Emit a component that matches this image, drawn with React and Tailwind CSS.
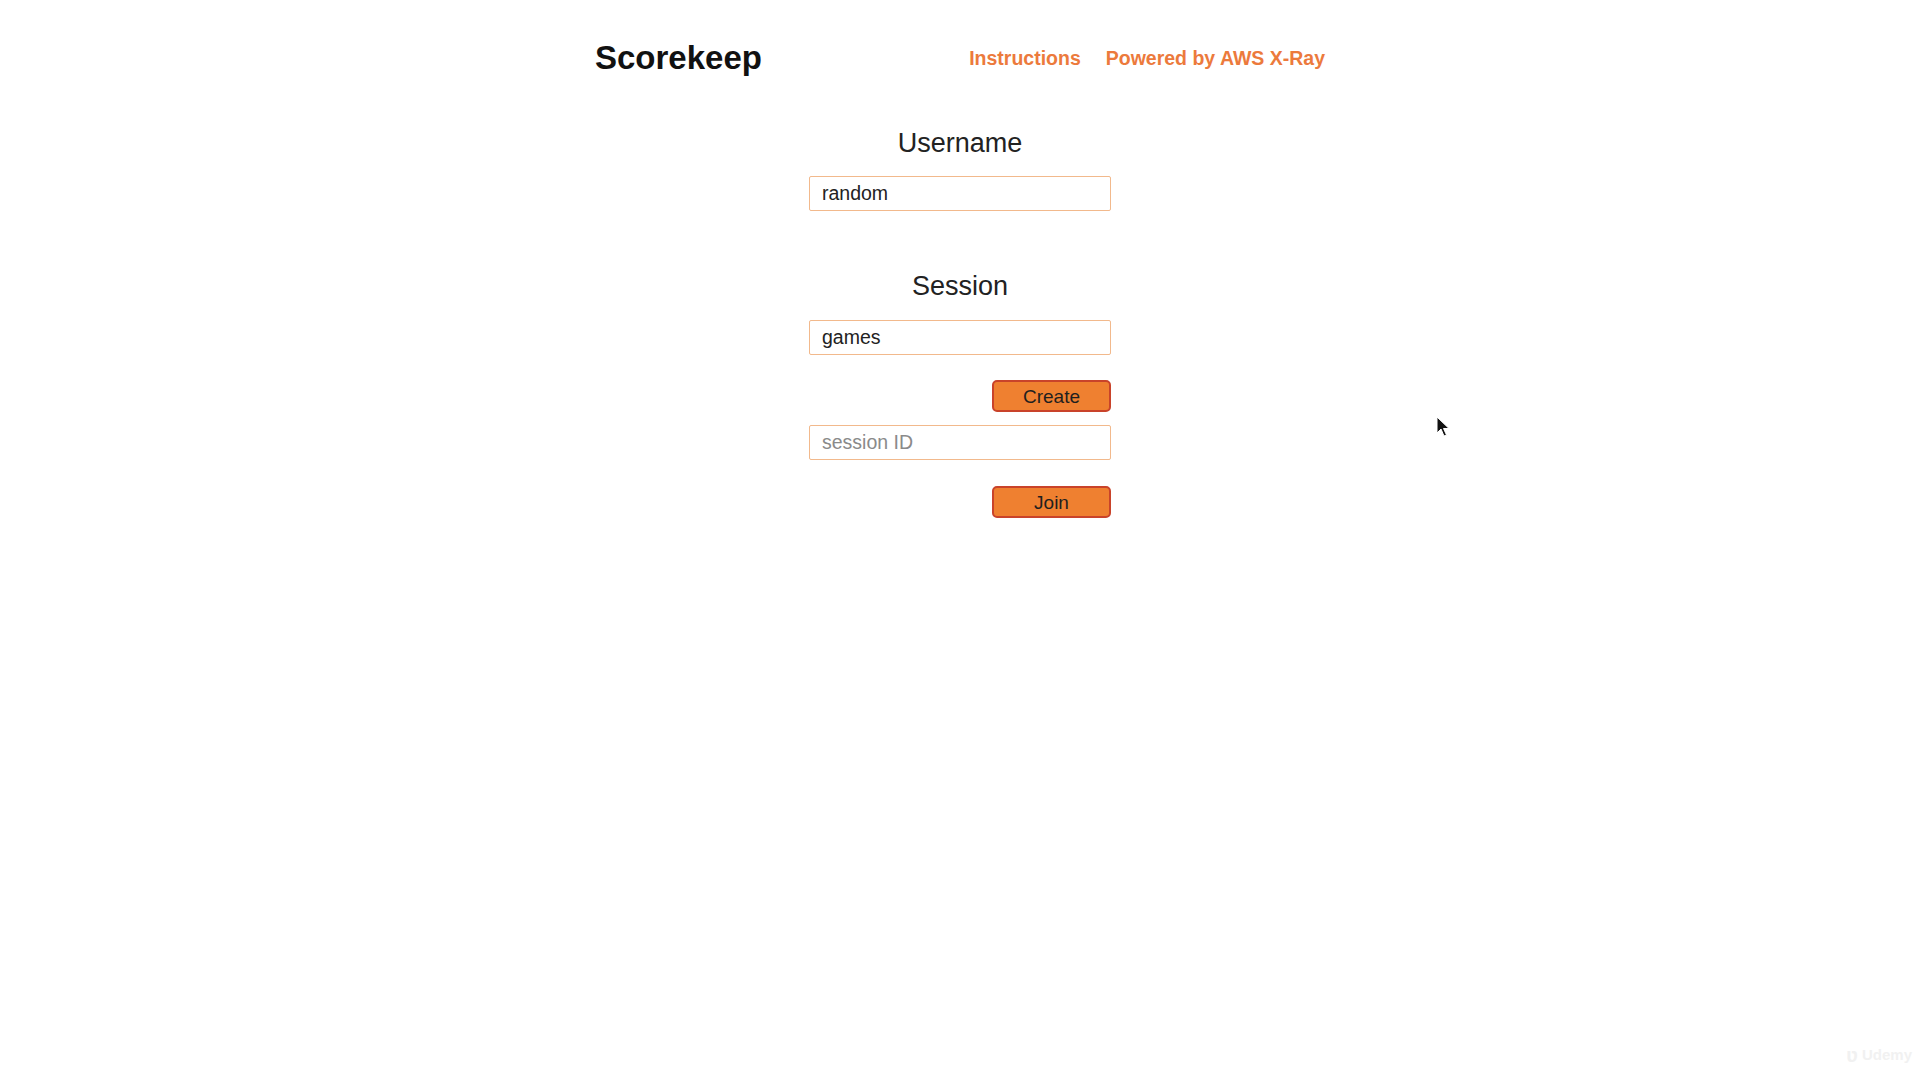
import React, { useState } from "react";

const FONT = "font-['Helvetica_Neue','Liberation_Sans',Arial,sans-serif]";

function Field({ value, placeholder, onChange, className = "" }) {
  return (
    <input
      value={value}
      placeholder={placeholder}
      onChange={(e) => onChange(e.target.value)}
      className={`h-[35px] w-full rounded-[2px] border-[1.5px] border-[#f2b98c] bg-white px-[12px] text-[19.5px] text-[#222] outline-none placeholder:text-[#8a8a8a] ${className}`}
    />
  );
}

function OrangeButton({ children, className = "" }) {
  return (
    <button
      className={`h-[32px] w-[119px] self-end rounded-[5px] border-2 border-[#c9432a] bg-[#ef8030] text-[19px] leading-none text-[#1f1f1f] ${className}`}
    >
      {children}
    </button>
  );
}

export default function App() {
  const [username, setUsername] = useState("random");
  const [session, setSession] = useState("games");
  const [sessionId, setSessionId] = useState("");

  return (
    <div className={`relative min-h-screen w-full bg-white pt-[36px] ${FONT}`}>
      {/* Header */}
      <div className="mx-auto flex h-[44px] w-[730px] items-start justify-between">
        <h1 className="text-[33px] font-bold leading-[44px] text-[#111]">Scorekeep</h1>
        <nav className="mt-[10px] flex items-center gap-[25px] text-[19.5px] font-bold leading-[24px] text-[#ec7a3c]">
          <a href="#">Instructions</a>
          <a href="#">Powered by AWS X-Ray</a>
        </nav>
      </div>

      {/* Form */}
      <div className="mx-auto mt-[47px] flex w-[302px] flex-col">
        <h2 className="text-center text-[27px] leading-[32px] text-[#222]">Username</h2>
        <Field value={username} onChange={setUsername} className="mt-[17px]" />

        <h2 className="mt-[59px] text-center text-[27px] leading-[32px] text-[#222]">Session</h2>
        <Field value={session} onChange={setSession} className="mt-[18px]" />
        <OrangeButton className="mt-[25px]">Create</OrangeButton>

        <Field
          value={sessionId}
          placeholder="session ID"
          onChange={setSessionId}
          className="mt-[13px]"
        />
        <OrangeButton className="mt-[26px]">Join</OrangeButton>
      </div>

      {/* mouse pointer */}
      <svg
        className="absolute left-[1436px] top-[416px]"
        width="14"
        height="22"
        viewBox="0 0 14 22"
      >
        <path
          d="M1 1 L1 17 L5 13 L8 20 L10.5 19 L7.5 12.5 L13 12.5 Z"
          fill="#111"
          stroke="#fff"
          strokeWidth="1"
        />
      </svg>

      {/* watermark */}
      <div className="absolute bottom-[10px] right-[8px] flex items-center gap-1 text-[15px] font-bold text-[#f1f1f1]">
        <span className="text-[20px]">ʋ</span>
        <span>Udemy</span>
      </div>
    </div>
  );
}
